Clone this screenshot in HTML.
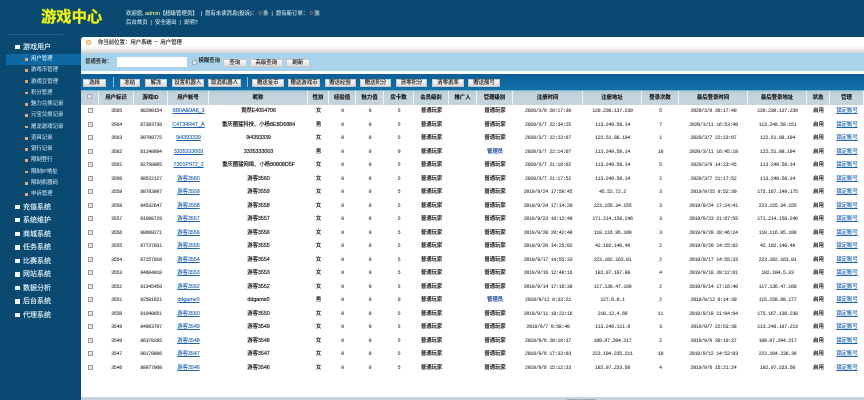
<!DOCTYPE html>
<html lang="zh"><head><meta charset="utf-8"><title>游戏中心</title>
<style>
*{box-sizing:border-box}
html,body{margin:0;padding:0;width:864px;height:400px;overflow:hidden;background:#0a4a72}
#p{position:absolute;left:0;top:0;width:864px;height:400px;overflow:hidden;filter:blur(.38px);font-family:"Liberation Sans","Noto Sans CJK SC",sans-serif;font-size:5.4px;background:repeating-linear-gradient(180deg,#08466e 0,#08466e 1px,#0b4c75 1px,#0b4c75 2px)}
.a{position:absolute;white-space:nowrap}
#logo{left:41px;top:8px;font-size:15.3px;line-height:20px;font-weight:bold;color:#f0f020;-webkit-text-stroke:.3px #dde820;text-shadow:0 0 1.5px #3c7a30}
.top{left:126px;color:#d4e6f0;line-height:8px;-webkit-text-stroke:.1px #d4e6f0}
.s{left:23px;color:#e0eef6;font-size:7px;line-height:9px;-webkit-text-stroke:.15px #e0eef6}
.ic{position:absolute;left:15px;width:4.5px;height:4.5px;background:#f0f6fa}
.m{left:31px;color:#c0dcec;font-size:5.4px;line-height:8px;-webkit-text-stroke:.1px #c0dcec}
.dot{position:absolute;left:25px;width:2.5px;height:2.5px;background:#e0a878}
.btn{position:absolute;height:8px;background:linear-gradient(#fafafa,#dcdcdc);border:.5px solid #c8c8c8;color:#111;font-size:5.4px;line-height:7px;text-align:center;-webkit-text-stroke:.12px #111}
.r{position:absolute;left:81px;width:783px;height:13.52px;display:grid;grid-template-columns:18px 35px 34px 41px 99px 21px 27px 28px 30px 35px 28px 36px 70px 59px 37px 69px 59px 23px 34px;align-items:center;text-align:center;color:#333;font-family:"Liberation Mono","Noto Sans CJK SC",monospace;font-size:5px;letter-spacing:-.3px;line-height:8px;-webkit-text-stroke:.08px #333}
.r span{white-space:nowrap;overflow:visible}
.r span:nth-child(1){display:block;width:5px;height:5px;margin:-1px 0 0 6.5px;background:#e8e8e8;border:.5px solid #999}
.r span:nth-child(4),.r span:nth-child(5),.r span:nth-child(6),.r span:nth-child(10),.r span:nth-child(12),.r span:nth-child(18),.r span:nth-child(19){font-family:"Liberation Sans","Noto Sans CJK SC",sans-serif;font-size:5.4px;letter-spacing:-.05px;color:#111;-webkit-text-stroke:.15px #111}
.r span:nth-child(4),.r span:nth-child(19){color:#1f62ae;-webkit-text-stroke:.12px #1f62ae;text-decoration:underline}
.r span:nth-child(12).g{color:#123f8f;-webkit-text-stroke:.15px #123f8f}
#h{position:absolute;left:81px;top:90px;width:783px;height:15px;display:grid;grid-template-columns:18px 35px 34px 41px 99px 21px 27px 28px 30px 35px 28px 36px 70px 59px 37px 69px 59px 23px 34px;background:linear-gradient(#b4ccdb,#c6d4dd 30%,#c4d2db);border-top:1px solid #7fb4d2;text-align:center;color:#111;font-size:5.4px;font-weight:bold;line-height:14px;-webkit-text-stroke:.1px #111}
#h span{border-right:.6px solid #eef3f6;white-space:nowrap}
</style></head><body>
<div id="p">
<div class="a" id="logo">游戏中心</div>
<div class="a top" style="top:9.5px">欢迎您, <span style="color:#dff05a">admin</span>【超级管理员】 &nbsp;|&nbsp; 您有未读消息(投诉)： <span style="color:#a33">0</span> 条 &nbsp;|&nbsp; 您有新订单： <span style="color:#a33">0</span> 张</div>
<div class="a top" style="top:18.5px">后台首页 &nbsp;|&nbsp; 安全退出 &nbsp;|&nbsp; 说明?</div>
<div class="a" style="left:8px;top:34px;width:55px;height:1px;background:#1f6088"></div>

<div class="ic" style="top:44.5px"></div><div class="a s" style="top:42.5px">游戏用户</div>
<div class="a" style="left:6px;top:54px;width:75px;height:10.5px;background:#0e69a3"></div>
<div class="dot" style="top:58px"></div><div class="a m" style="top:55px;color:#e4f0f7">用户管理</div>
<div class="dot" style="top:69px"></div><div class="a m" style="top:66px">游戏币管理</div>
<div class="dot" style="top:80px"></div><div class="a m" style="top:77.5px">游戏豆管理</div>
<div class="dot" style="top:91.5px"></div><div class="a m" style="top:89px">积分管理</div>
<div class="dot" style="top:103px"></div><div class="a m" style="top:100px">魅力兑换记录</div>
<div class="dot" style="top:114px"></div><div class="a m" style="top:111px">元宝兑换记录</div>
<div class="dot" style="top:125.5px"></div><div class="a m" style="top:122.5px">屠龙游戏记录</div>
<div class="dot" style="top:137px"></div><div class="a m" style="top:134px">道具记录</div>
<div class="dot" style="top:148px"></div><div class="a m" style="top:145px">银行记录</div>
<div class="dot" style="top:159px"></div><div class="a m" style="top:156px">限制登行</div>
<div class="dot" style="top:170.5px"></div><div class="a m" style="top:168px">限制IP地址</div>
<div class="dot" style="top:182px"></div><div class="a m" style="top:179px">限制机器码</div>
<div class="dot" style="top:193px"></div><div class="a m" style="top:190px">申诉管理</div>
<div class="ic" style="top:204.5px"></div><div class="a s" style="top:202.5px">充值系统</div>
<div class="ic" style="top:217.5px"></div><div class="a s" style="top:216px">系统维护</div>
<div class="ic" style="top:231.5px"></div><div class="a s" style="top:229.5px">商城系统</div>
<div class="ic" style="top:245px"></div><div class="a s" style="top:243px">任务系统</div>
<div class="ic" style="top:258.5px"></div><div class="a s" style="top:256.5px">比赛系统</div>
<div class="ic" style="top:272px"></div><div class="a s" style="top:270px">网站系统</div>
<div class="ic" style="top:285.5px"></div><div class="a s" style="top:283.5px">数据分析</div>
<div class="ic" style="top:299px"></div><div class="a s" style="top:297px">后台系统</div>
<div class="ic" style="top:312.5px"></div><div class="a s" style="top:310.5px">代理系统</div>

<div class="a" style="left:81px;top:36.5px;width:783px;height:363.5px;background:#fff;border-top-left-radius:3px"></div>
<div class="a" style="left:81px;top:36.5px;width:783px;height:16px;background:linear-gradient(#fff 0,#fff 55%,#e8e8e8 80%,#d2d2d2 100%);border-top-left-radius:3px"></div>
<div class="a" style="left:85.5px;top:40px;width:5px;height:5px;border-radius:50%;background:#f5f0d8;border:1.2px solid #e0a030"></div>
<div class="a" style="left:98px;top:39px;line-height:8px;color:#111;-webkit-text-stroke:.12px #111">你当前位置：用户系统 － 用户管理</div>
<div class="a" style="left:81px;top:52.5px;width:783px;height:18.5px;background:#a8d3ea"></div>
<div class="a" style="left:85px;top:57.5px;line-height:8px;color:#111;-webkit-text-stroke:.12px #111">普通查询：</div>
<div class="a" style="left:116.5px;top:57px;width:70px;height:9.5px;background:#fff"></div>
<div class="a" style="left:192px;top:59.5px;width:5px;height:5px;background:#d3e6f0;border:.5px solid #a0b4c0"></div>
<div class="a" style="left:198.5px;top:57px;line-height:8px;color:#111;-webkit-text-stroke:.12px #111">模糊查询</div>
<div class="btn" style="left:223px;top:58.5px;width:23.5px">查询</div>
<div class="btn" style="left:249.5px;top:58.5px;width:33.5px">高级查询</div>
<div class="btn" style="left:286px;top:58.5px;width:23.5px">刷新</div>

<div class="a" style="left:81px;top:74px;width:783px;height:16.5px;background:linear-gradient(#0b5e95,#1272ac)"></div>
<div class="btn" style="left:83px;top:78.5px;width:23px">选择</div>
<div class="a" style="left:113px;top:77px;width:.6px;height:10px;background:#8fc0dc"></div>
<div class="btn" style="left:119.5px;top:78.5px;width:20.5px">冻结</div>
<div class="btn" style="left:145px;top:78.5px;width:22px">解冻</div>
<div class="btn" style="left:172px;top:78.5px;width:31.5px">设置机器人</div>
<div class="btn" style="left:208px;top:78.5px;width:33px">取消机器人</div>
<div class="a" style="left:247px;top:77px;width:.6px;height:10px;background:#8fc0dc"></div>
<div class="btn" style="left:252px;top:78.5px;width:31.5px">赠送金币</div>
<div class="btn" style="left:288px;top:78.5px;width:32px">赠送游戏币</div>
<div class="btn" style="left:324.5px;top:78.5px;width:31px">赠送经验</div>
<div class="btn" style="left:360px;top:78.5px;width:31px">赠送积分</div>
<div class="btn" style="left:396px;top:78.5px;width:31px">清零积分</div>
<div class="btn" style="left:432px;top:78.5px;width:32px">清零逃率</div>
<div class="btn" style="left:468px;top:78.5px;width:32px">赠送靓号</div>

<div id="h"><span><i style="display:inline-block;width:5px;height:5px;background:#e2e8ec;border:.5px solid #aab"></i></span><span>用户标识</span><span>游戏ID</span><span>用户帐号</span><span>昵称</span><span>性别</span><span>经验值</span><span>魅力值</span><span>房卡数</span><span>会员级别</span><span>推广人</span><span>管理级别</span><span>注册时间</span><span>注册地址</span><span>登录次数</span><span>最后登录时间</span><span>最后登录地址</span><span>状态</span><span>管理</span></div>

<div class="r" style="top:104.5px"><span></span><span>3565</span><span>88290154</span><span>6B0A&amp;9A8_3</span><span>竟然E4054706</span><span>女</span><span>0</span><span>0</span><span>5</span><span>普通玩家</span><span></span><span>普通玩家</span><span>2020/3/9 20:17:39</span><span>120.230.137.239</span><span>5</span><span>2020/3/9 20:17:40</span><span>120.230.137.239</span><span>启用</span><span>锁定账号</span></div>
<div class="r" style="top:118px"><span></span><span>3564</span><span>87393738</span><span>C4T34R4T_A</span><span>重庆圈猛科技、小杨8E8D6884</span><span>男</span><span>0</span><span>0</span><span>5</span><span>普通玩家</span><span></span><span>普通玩家</span><span>2020/3/7 22:34:25</span><span>113.249.58.14</span><span>7</span><span>2020/3/11 16:53:48</span><span>113.249.59.151</span><span>启用</span><span>锁定账号</span></div>
<div class="r" style="top:131.5px"><span></span><span>3563</span><span>80700775</span><span>9i4393339</span><span>9i4393339</span><span>女</span><span>0</span><span>0</span><span>5</span><span>普通玩家</span><span></span><span>普通玩家</span><span>2020/3/7 22:23:07</span><span>122.51.88.194</span><span>1</span><span>2020/3/7 22:23:07</span><span>122.51.88.194</span><span>启用</span><span>锁定账号</span></div>
<div class="r" style="top:145px"><span></span><span>3562</span><span>81148884</span><span>3335333003</span><span>3335333003</span><span>男</span><span>0</span><span>0</span><span>0</span><span>普通玩家</span><span></span><span class="g">管理员</span><span>2020/3/7 22:14:07</span><span>113.249.58.14</span><span>10</span><span>2020/3/11 16:45:18</span><span>122.51.88.194</span><span>启用</span><span>锁定账号</span></div>
<div class="r" style="top:158.5px"><span></span><span>3561</span><span>82758805</span><span>T301P972_2</span><span>重庆圈猛网络、小杨80808D5F</span><span>女</span><span>0</span><span>0</span><span>5</span><span>普通玩家</span><span></span><span>普通玩家</span><span>2020/3/7 21:19:02</span><span>113.249.58.14</span><span>5</span><span>2020/3/9 14:23:45</span><span>113.249.58.14</span><span>启用</span><span>锁定账号</span></div>
<div class="r" style="top:172px"><span></span><span>3560</span><span>80522127</span><span>游客3560</span><span>游客3560</span><span>女</span><span>0</span><span>0</span><span>5</span><span>普通玩家</span><span></span><span>普通玩家</span><span>2020/3/7 21:17:52</span><span>113.249.58.14</span><span>2</span><span>2020/3/7 21:17:52</span><span>113.249.58.14</span><span>启用</span><span>锁定账号</span></div>
<div class="r" style="top:185.6px"><span></span><span>3559</span><span>80783997</span><span>游客3559</span><span>游客3559</span><span>女</span><span>0</span><span>0</span><span>5</span><span>普通玩家</span><span></span><span>普通玩家</span><span>2019/9/24 17:59:45</span><span>45.52.72.2</span><span>3</span><span>2019/9/25 9:52:30</span><span>175.167.149.175</span><span>启用</span><span>锁定账号</span></div>
<div class="r" style="top:199.1px"><span></span><span>3558</span><span>84532647</span><span>游客3558</span><span>游客3558</span><span>女</span><span>0</span><span>0</span><span>5</span><span>普通玩家</span><span></span><span>普通玩家</span><span>2019/9/24 17:14:28</span><span>223.155.34.155</span><span>3</span><span>2019/9/24 17:24:41</span><span>223.155.34.155</span><span>启用</span><span>锁定账号</span></div>
<div class="r" style="top:212.6px"><span></span><span>3557</span><span>81098729</span><span>游客3557</span><span>游客3557</span><span>女</span><span>0</span><span>0</span><span>5</span><span>普通玩家</span><span></span><span>普通玩家</span><span>2019/9/23 19:12:48</span><span>171.214.158.246</span><span>3</span><span>2019/9/23 21:07:55</span><span>171.214.158.246</span><span>启用</span><span>锁定账号</span></div>
<div class="r" style="top:226.1px"><span></span><span>3556</span><span>88668271</span><span>游客3556</span><span>游客3556</span><span>女</span><span>0</span><span>0</span><span>5</span><span>普通玩家</span><span></span><span>普通玩家</span><span>2019/9/20 20:42:48</span><span>118.116.95.109</span><span>3</span><span>2019/9/20 20:46:24</span><span>118.116.95.109</span><span>启用</span><span>锁定账号</span></div>
<div class="r" style="top:239.6px"><span></span><span>3555</span><span>87727031</span><span>游客3555</span><span>游客3555</span><span>女</span><span>0</span><span>0</span><span>5</span><span>普通玩家</span><span></span><span>普通玩家</span><span>2019/9/20 14:25:02</span><span>42.102.140.49</span><span>2</span><span>2019/9/20 14:25:02</span><span>42.102.140.49</span><span>启用</span><span>锁定账号</span></div>
<div class="r" style="top:253.1px"><span></span><span>3554</span><span>87257018</span><span>游客3554</span><span>游客3554</span><span>女</span><span>0</span><span>0</span><span>5</span><span>普通玩家</span><span></span><span>普通玩家</span><span>2019/9/17 14:55:33</span><span>223.102.163.81</span><span>2</span><span>2019/9/17 14:55:33</span><span>223.102.163.81</span><span>启用</span><span>锁定账号</span></div>
<div class="r" style="top:266.6px"><span></span><span>3553</span><span>84604018</span><span>游客3553</span><span>游客3553</span><span>女</span><span>0</span><span>0</span><span>5</span><span>普通玩家</span><span></span><span>普通玩家</span><span>2019/9/16 12:48:16</span><span>182.97.197.88</span><span>4</span><span>2019/9/18 20:12:01</span><span>182.104.5.33</span><span>启用</span><span>锁定账号</span></div>
<div class="r" style="top:280.2px"><span></span><span>3552</span><span>81345458</span><span>游客3552</span><span>游客3552</span><span>女</span><span>0</span><span>0</span><span>5</span><span>普通玩家</span><span></span><span>普通玩家</span><span>2019/9/14 17:16:38</span><span>117.136.47.168</span><span>2</span><span>2019/9/14 17:16:40</span><span>117.136.47.168</span><span>启用</span><span>锁定账号</span></div>
<div class="r" style="top:293.7px"><span></span><span>3551</span><span>82581621</span><span>ddgame0</span><span>ddgame0</span><span>男</span><span>0</span><span>0</span><span>0</span><span>普通玩家</span><span></span><span class="g">管理员</span><span>2019/9/12 9:33:21</span><span>127.0.0.1</span><span>2</span><span>2019/9/12 9:14:30</span><span>115.150.89.177</span><span>启用</span><span>锁定账号</span></div>
<div class="r" style="top:307.2px"><span></span><span>3550</span><span>81048651</span><span>游客3550</span><span>游客3550</span><span>女</span><span>0</span><span>0</span><span>5</span><span>普通玩家</span><span></span><span>普通玩家</span><span>2019/9/11 18:22:16</span><span>210.12.4.66</span><span>11</span><span>2019/9/18 11:04:04</span><span>175.167.130.238</span><span>启用</span><span>锁定账号</span></div>
<div class="r" style="top:320.7px"><span></span><span>3549</span><span>84963707</span><span>游客3549</span><span>游客3549</span><span>女</span><span>0</span><span>0</span><span>5</span><span>普通玩家</span><span></span><span>普通玩家</span><span>2019/9/7 0:58:40</span><span>113.246.111.0</span><span>3</span><span>2019/9/7 22:53:38</span><span>113.248.187.213</span><span>启用</span><span>锁定账号</span></div>
<div class="r" style="top:334.2px"><span></span><span>3548</span><span>86378295</span><span>游客3548</span><span>游客3548</span><span>女</span><span>0</span><span>0</span><span>5</span><span>普通玩家</span><span></span><span>普通玩家</span><span>2019/9/6 20:19:37</span><span>180.97.204.217</span><span>2</span><span>2019/9/6 20:19:37</span><span>180.97.204.217</span><span>启用</span><span>锁定账号</span></div>
<div class="r" style="top:347.7px"><span></span><span>3547</span><span>88178806</span><span>游客3547</span><span>游客3547</span><span>女</span><span>0</span><span>0</span><span>5</span><span>普通玩家</span><span></span><span>普通玩家</span><span>2019/9/6 17:33:03</span><span>223.104.235.211</span><span>10</span><span>2019/9/12 14:52:03</span><span>223.104.236.36</span><span>启用</span><span>锁定账号</span></div>
<div class="r" style="top:361.2px"><span></span><span>3546</span><span>89977908</span><span>游客3546</span><span>游客3546</span><span>女</span><span>0</span><span>0</span><span>5</span><span>普通玩家</span><span></span><span>普通玩家</span><span>2019/9/6 15:12:33</span><span>182.97.233.50</span><span>4</span><span>2019/9/6 15:21:24</span><span>182.97.233.50</span><span>启用</span><span>锁定账号</span></div>

<div class="a" style="left:81px;top:396.7px;width:783px;height:3.3px;background:#c6d4dc"></div>
<div class="a" style="left:567px;top:398.5px;width:14px;height:2px;background:#eef2f4;border:.5px solid #9aa8b0"></div>
<div class="a" style="left:582px;top:398.5px;width:14px;height:2px;background:#eef2f4;border:.5px solid #9aa8b0"></div>
</div>
</body></html>
